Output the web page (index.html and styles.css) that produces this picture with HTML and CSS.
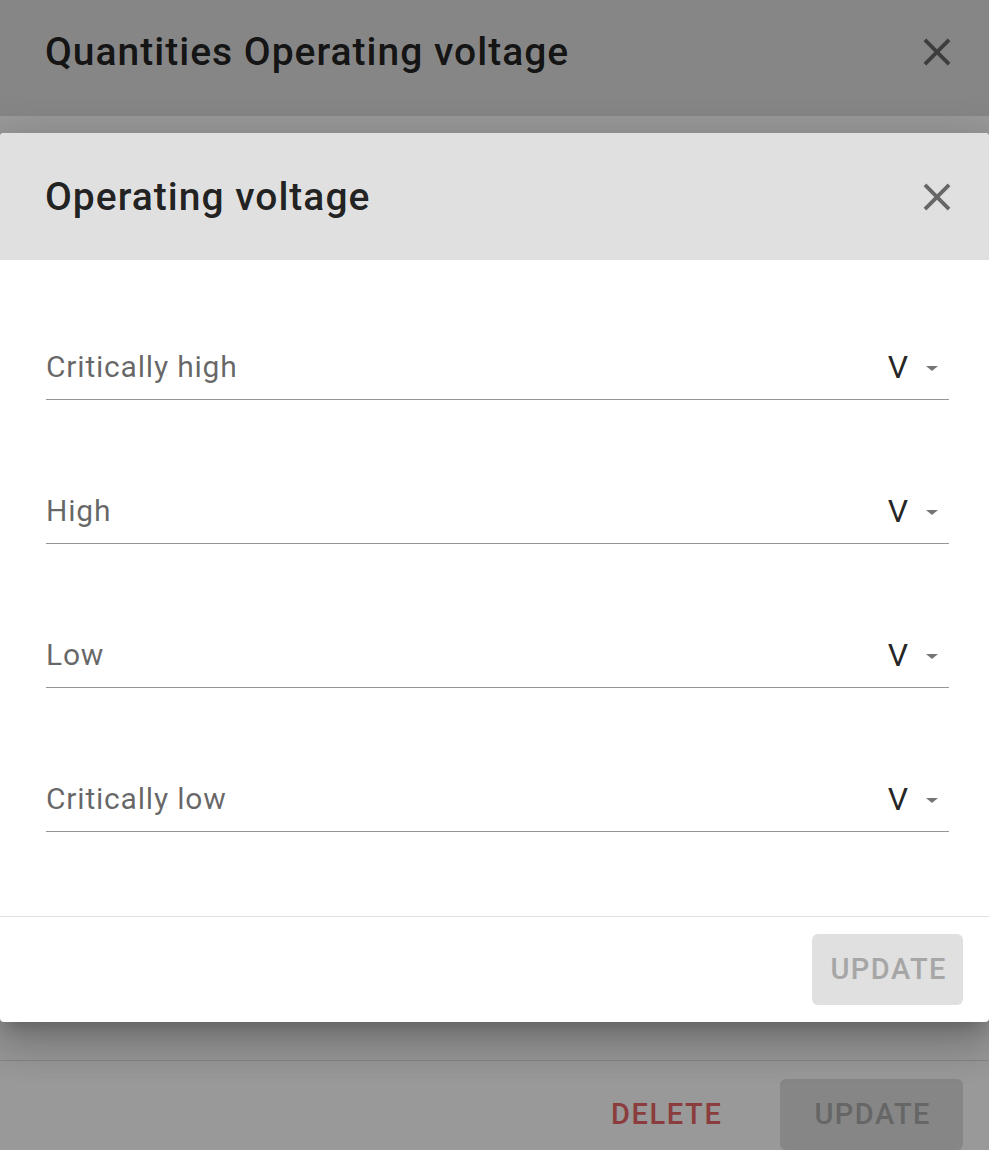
FILE: index.html
```html
<!DOCTYPE html>
<html>
<head>
<meta charset="utf-8">
<link rel="stylesheet" href="styles.css">
</head>
<body>
<div class="back">
  <div class="back-header">
    <h2 class="title">Quantities Operating voltage</h2>
    <svg class="close" viewBox="0 0 24 24"><path d="M19 6.41L17.59 5 12 10.59 6.41 5 5 6.41 10.59 12 5 17.59 6.41 19 12 13.41 17.59 19 19 17.59 13.41 12z"/></svg>
  </div>
  <div class="back-body"></div>
  <div class="back-footer">
    <span class="delete">DELETE</span>
    <span class="btn btn-back">UPDATE</span>
  </div>
</div>
<div class="overlay"></div>
<div class="dialog">
  <div class="dlg-header">
    <h2 class="title">Operating voltage</h2>
    <svg class="close" viewBox="0 0 24 24"><path d="M19 6.41L17.59 5 12 10.59 6.41 5 5 6.41 10.59 12 5 17.59 6.41 19 12 13.41 17.59 19 19 17.59 13.41 12z"/></svg>
  </div>
  <div class="dlg-body">
    <div class="field"><span class="label">Critically high</span><span class="unit">V</span><span class="caret"></span></div>
    <div class="field"><span class="label">High</span><span class="unit">V</span><span class="caret"></span></div>
    <div class="field"><span class="label">Low</span><span class="unit">V</span><span class="caret"></span></div>
    <div class="field"><span class="label">Critically low</span><span class="unit">V</span><span class="caret"></span></div>
  </div>
  <div class="dlg-footer">
    <span class="btn">UPDATE</span>
  </div>
</div>
</body>
</html>
```
FILE: styles.css
```css
html, body {
  margin: 0;
  padding: 0;
}
body {
  width: 989px;
  height: 1150px;
  overflow: hidden;
  position: relative;
  font-family: Roboto, "Liberation Sans", sans-serif;
  background: #ffffff;
}
.back {
  height: 1150px;
  display: flex;
  flex-direction: column;
  background: #ffffff;
}
.back-header {
  height: 116px;
  box-sizing: border-box;
  background: #e0e0e0;
  display: flex;
  align-items: flex-start;
  justify-content: space-between;
  padding: 24px 29px 0 45px;
}
.title {
  margin: 0;
  font-size: 39px;
  font-weight: 500;
  line-height: 56px;
  letter-spacing: 1px;
  color: rgba(0, 0, 0, 0.87);
}
.close {
  width: 46px;
  height: 46px;
  fill: rgba(0, 0, 0, 0.54);
  margin-top: 5px;
}
.back-body {
  flex: 1;
}
.back-footer {
  border-top: 1px solid #e0e0e0;
  height: 90px;
  box-sizing: border-box;
  padding: 18px 26px 0 0;
  display: flex;
  justify-content: flex-end;
  align-items: flex-start;
  gap: 58px;
}
.delete {
  color: #e86464;
  font-size: 29px;
  font-weight: 500;
  letter-spacing: 1.6px;
  line-height: 71px;
}
.btn {
  display: inline-block;
  background: #e0e0e0;
  color: #a6a6a6;
  border-radius: 6px;
  height: 71px;
  line-height: 71px;
  padding: 0 16px 0 18px;
  font-size: 29px;
  font-weight: 500;
  letter-spacing: 1.5px;
}
.btn-back {
  padding: 0 32px 0 34px;
  color: #aaaaaa;
}
.overlay {
  position: absolute;
  inset: 0;
  background: rgba(0, 0, 0, 0.4);
}
.dialog {
  position: absolute;
  top: 133px;
  left: 0;
  width: 989px;
  height: 889px;
  background: #ffffff;
  border-radius: 4px;
  display: flex;
  flex-direction: column;
  box-shadow: 0px 11px 15px -7px rgba(0,0,0,0.2), 0px 24px 38px 3px rgba(0,0,0,0.14), 0px 9px 46px 8px rgba(0,0,0,0.12);
  overflow: hidden;
}
.dlg-header {
  height: 127px;
  flex: none;
  box-sizing: border-box;
  background: #e0e0e0;
  display: flex;
  align-items: center;
  justify-content: space-between;
  padding: 0 29px 0 45px;
}
.dlg-header .close {
  margin-top: 0;
}
.dlg-body {
  flex: 1;
  padding: 74px 40px 0 46px;
  display: flex;
  flex-direction: column;
  gap: 78px;
}
.field {
  height: 66px;
  box-sizing: border-box;
  border-bottom: 1px solid rgba(0, 0, 0, 0.42);
  display: flex;
  align-items: center;
}
.label {
  flex: 1;
  font-size: 30px;
  letter-spacing: 0.8px;
  color: rgba(0, 0, 0, 0.6);
}
.unit {
  font-size: 32px;
  color: rgba(0, 0, 0, 0.87);
  margin-right: 18px;
  margin-left: 1px;
}
.caret {
  width: 0;
  height: 0;
  border-left: 6.5px solid transparent;
  border-right: 6.5px solid transparent;
  border-top: 5.5px solid rgba(0, 0, 0, 0.54);
  margin-right: 11px;
  margin-top: 3px;
}
.dlg-footer {
  flex: none;
  height: 106px;
  box-sizing: border-box;
  border-top: 1px solid #e0e0e0;
  display: flex;
  justify-content: flex-end;
  align-items: flex-start;
  padding: 17px 26px 0 0;
}
```
